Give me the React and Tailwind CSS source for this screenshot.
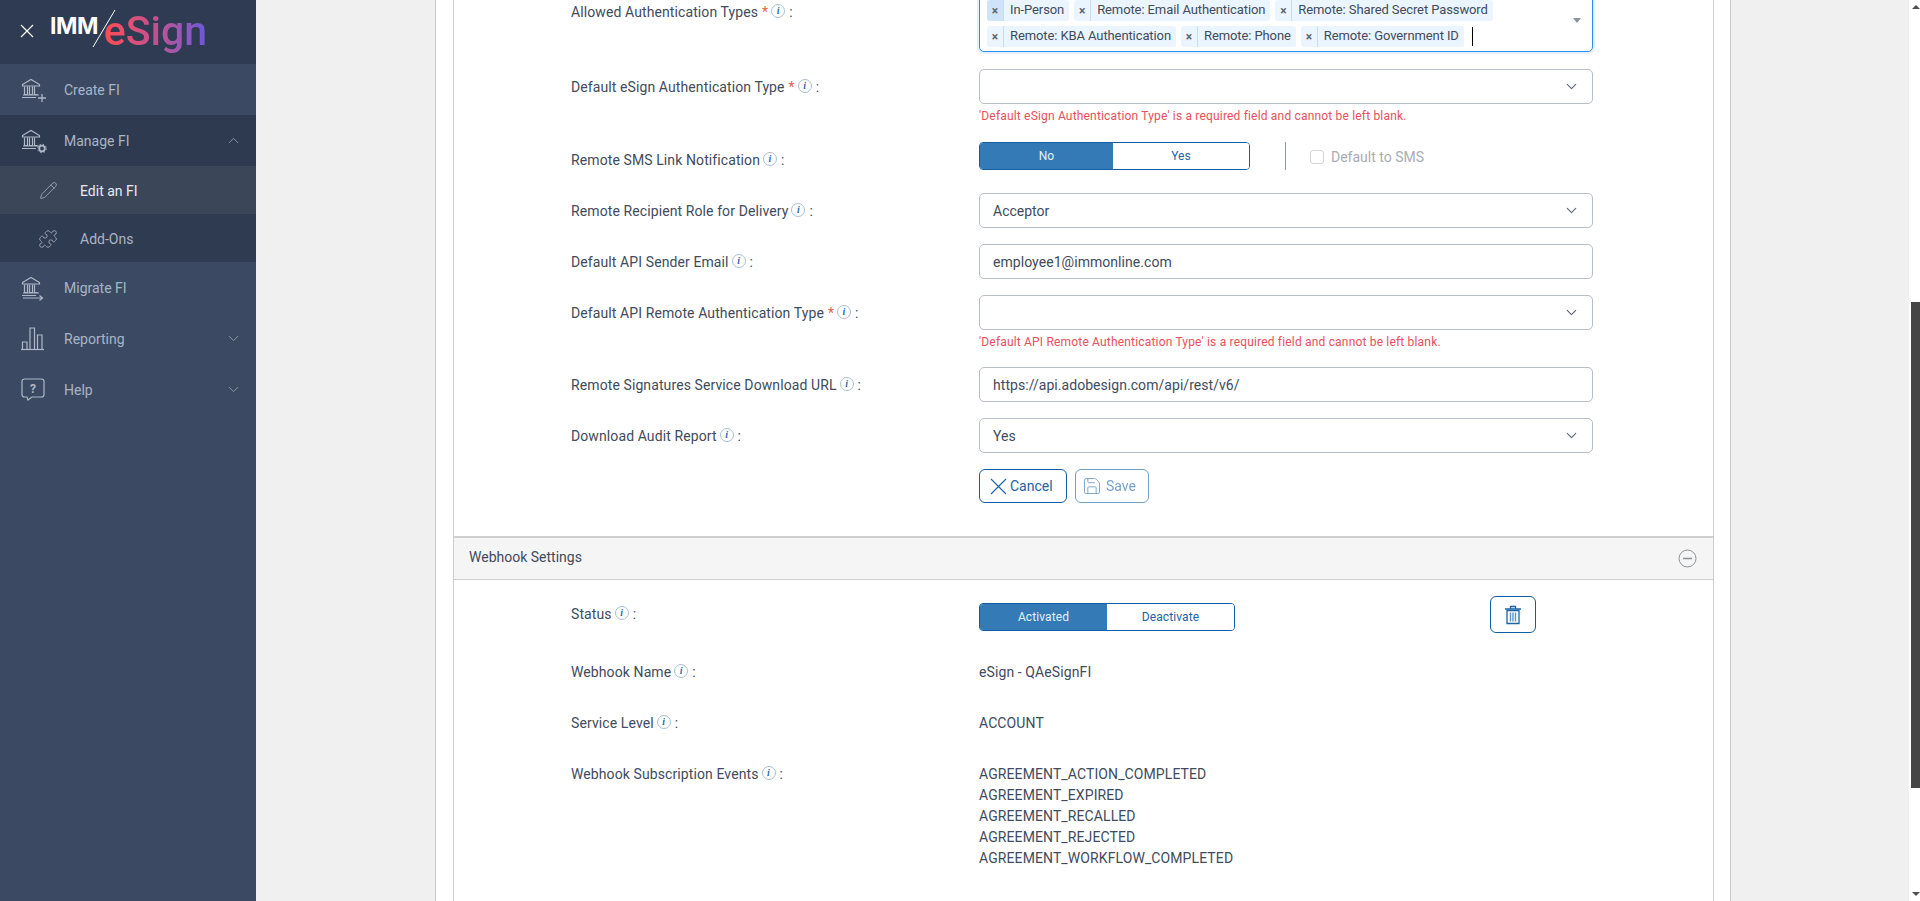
import React from 'react';
import { ChevronDown, ChevronUp, Pencil, Puzzle, Save } from 'lucide-react';

const iconStroke = '#aeb8c6';

// shared bank glyph for the sidebar icons
const BankIcon = ({ children }) => (
  <svg width="30" height="26" viewBox="0 0 30 26" fill="none" stroke={iconStroke} strokeWidth="1.200">
    <path d="M2.500 7.500 11 2.500l8.500 5v1.500h-17z" />
    <path d="M4.500 9.500v8h3v-8M9.500 9.500v8h3v-8M14.500 9.500v8h3" />
    <path d="M3 18h16M2 20.500h14" />
    {children}
  </svg>
);

const AddBankIcon = () => (
  <BankIcon>
    <path d="M22 17v8M18 21h8" strokeWidth="1.300" />
  </BankIcon>
);

const GearBankIcon = () => (
  <BankIcon>
    <circle cx="22" cy="20.500" r="2.800" strokeWidth="1.800" />
    <circle cx="22" cy="20.500" r="4.300" strokeWidth="1" strokeDasharray="1.500 1.900" />
  </BankIcon>
);

const MoveBankIcon = () => (
  <BankIcon>
    <path d="M3 23h19M19.500 20.500 22.500 23l-3 2.500" />
  </BankIcon>
);

const ChartIcon = () => (
  <svg width="26" height="26" viewBox="0 0 26 26" fill="none" stroke={iconStroke} strokeWidth="1.200">
    <path d="M1 23.500h23" />
    <path d="M2.500 23v-7h4.500v7M10 23V2h4.500v21M17.500 23V9h4.500v14" />
  </svg>
);

const HelpIcon = () => (
  <svg width="26" height="26" viewBox="0 0 26 26" fill="none" stroke={iconStroke} strokeWidth="1.200">
    <path d="M4.500 2h17a2.500 2.500 0 0 1 2.500 2.500v13a2.500 2.500 0 0 1-2.500 2.500H12l-4 3-1-3H4.500A2.500 2.500 0 0 1 2 17.500v-13A2.500 2.500 0 0 1 4.500 2z" />
    <text x="13" y="15.500" textAnchor="middle" fontSize="12" fontWeight="700" fontFamily="Roboto" fill={iconStroke} stroke="none">?</text>
  </svg>
);

const InfoDot = () => (
  <span className="inline-flex h-[14px] w-[14px] shrink-0 -translate-y-px items-center justify-center rounded-full border border-[#a9bfd2] font-[family-name:'Liberation_Serif',serif] text-[10px] font-bold italic leading-none text-[#2f6ea5]">
    i
  </span>
);

const Label = ({ text, required, className = '' }) => (
  <div className={`flex h-[35px] items-center text-sm tracking-[0.1px] text-[#414b5c] ${className}`}>
    <span>{text}</span>
    {required && <span className="ml-[4px] text-[#e8604c]">*</span>}
    <span className="ml-[3px] flex"><InfoDot /></span>
    <span className="ml-[4px]">:</span>
  </div>
);

const SelectBox = ({ value }) => (
  <div className="flex h-[35px] items-center justify-between rounded-[5px] border border-[#b7bec8] bg-white pl-[13px] pr-[12px] text-sm text-[#414b5c]">
    <span>{value}</span>
    <ChevronDown size={17} strokeWidth={1.5} className="text-[#5a6473]" />
  </div>
);

const TextBox = ({ value }) => (
  <div className="flex h-[35px] items-center rounded-[5px] border border-[#b7bec8] bg-white pl-[13px] text-sm tracking-[0.05px] text-[#414b5c]">
    {value}
  </div>
);

const ErrorText = ({ children }) => (
  <p className="mt-[3px] h-[18px] text-xs leading-[18px] tracking-[0.18px] text-[#e8505b]">{children}</p>
);

const Toggle = ({ on, off, onWidth, offWidth }) => (
  <div className="flex h-[28px] overflow-hidden rounded-[4px] border border-[#0f5fa6] text-xs">
    <div className={`${onWidth} flex items-center justify-center bg-[#337ab7] text-[#e9f0f7]`}>{on}</div>
    <div className={`${offWidth} flex items-center justify-center bg-white text-[#1c64a5]`}>{off}</div>
  </div>
);

const Chip = ({ text, active }) => (
  <div className="flex h-[21px] items-stretch rounded-[3px] bg-[#ebf5ff] text-[13px] leading-[20px] tracking-[-0.1px] text-[#414b5c]">
    <span className={`${active ? 'bg-[#cfe4fb]' : ''} flex w-[17px] items-center justify-center rounded-l-[3px] border-r border-[#c5def8] text-[12px] font-bold text-[#5a6473]`}>×</span>
    <span className="pl-[6px] pr-[5px]">{text}</span>
  </div>
);

const NavItem = ({ icon, label, chevron, className = '' }) => (
  <div className={`flex h-[51px] items-center pl-[20px] pr-[14px] text-sm text-[#a9b5c6] ${className}`}>
    <span className="flex w-[44px] items-center">{icon}</span>
    <span>{label}</span>
    {chevron === 'down' && <ChevronDown size={17} strokeWidth={1} className="ml-auto text-[#a9b3c2]" />}
    {chevron === 'up' && <ChevronUp size={17} strokeWidth={1} className="ml-auto text-[#a9b3c2]" />}
  </div>
);

const Sidebar = () => (
  <aside className="flex w-[256px] shrink-0 flex-col bg-[#3b4a62]">
    <div className="relative flex h-[64px] items-start bg-[#2f3b52] pl-[19px]">
      <svg width="16" height="16" viewBox="0 0 16 16" className="mt-[23px]" fill="none" stroke="#ffffff" strokeWidth="1.200">
        <path d="M2 2l12 12M14 2 2 14" />
      </svg>
      <span className="ml-[15px] mt-[15px] font-[family-name:Inter,sans-serif] text-[23px] font-bold leading-none tracking-[-0.5px] text-white">IMM</span>
      <svg width="26" height="40" viewBox="0 0 26 40" className="absolute left-[92px] top-[9px]" fill="none" stroke="#ffffff" strokeWidth="1">
        <path d="M23 1 1 38" />
      </svg>
      <span className="ml-[6px] mt-[8px] bg-gradient-to-r from-[#ff4a50] via-[#c2508f] to-[#6b55d9] bg-clip-text text-[41px] font-medium leading-[46px] text-transparent">eSign</span>
    </div>
    <NavItem icon={<AddBankIcon />} label="Create FI" />
    <NavItem icon={<GearBankIcon />} label="Manage FI" chevron="up" className="bg-[#2e3a4f]" />
    <div className="flex h-[48px] items-center bg-[#3b4658] pl-[39px] pt-px text-sm text-[#e6eaf0]">
      <span className="flex w-[41px] items-center"><Pencil size={19} strokeWidth={1} className="text-[#a9b3c2]" /></span>
      Edit an FI
    </div>
    <div className="flex h-[48px] items-center bg-[#2f3b50] pl-[38px] pt-px text-sm text-[#a9b5c6]">
      <span className="flex w-[42px] items-center"><Puzzle size={20} strokeWidth={1} className="text-[#a9b3c2]" /></span>
      Add-Ons
    </div>
    <NavItem icon={<MoveBankIcon />} label="Migrate FI" />
    <NavItem icon={<ChartIcon />} label="Reporting" chevron="down" />
    <NavItem icon={<HelpIcon />} label="Help" chevron="down" />
  </aside>
);

const FormRow = ({ label, required, children, className = '', labelClass = '' }) => (
  <div className={`grid grid-cols-[408px_614px] ${className}`}>
    <Label text={label} required={required} className={labelClass} />
    <div>{children}</div>
  </div>
);

const AuthenticationForm = () => (
  <div className="-mt-[5px] pl-[117px]">
    <FormRow label="Allowed Authentication Types" required labelClass="-mt-px">
      <div className="relative h-[57px] rounded-[5px] border border-[#2f8bf0] bg-white pl-[7px] pt-[4px] shadow-[0_0_0_2px_#e3f0fd]">
        <div className="flex gap-[5px]">
          <Chip text="In-Person" active />
          <Chip text="Remote: Email Authentication" />
          <Chip text="Remote: Shared Secret Password" />
        </div>
        <div className="mt-[5px] flex items-center gap-[5px]">
          <Chip text="Remote: KBA Authentication" />
          <Chip text="Remote: Phone" />
          <Chip text="Remote: Government ID" />
          <span className="ml-[3px] h-[19px] w-px bg-black" />
        </div>
        <span className="absolute right-[11px] top-[22px] h-0 w-0 border-x-[4px] border-t-[5px] border-x-transparent border-t-[#8a929c]" />
      </div>
    </FormRow>

    <FormRow label="Default eSign Authentication Type" required className="mt-[17px]">
      <SelectBox />
      <ErrorText>'Default eSign Authentication Type' is a required field and cannot be left blank.</ErrorText>
    </FormRow>

    <FormRow label="Remote SMS Link Notification" className="mt-[17px]">
      <div className="flex items-start">
        <div className="w-[271px]">
          <Toggle on="No" off="Yes" onWidth="w-[133px]" offWidth="w-[136px]" />
        </div>
        <span className="ml-[35px] h-[28px] w-px bg-[#8c99a8]" />
        <div className="ml-[24px] flex h-[28px] items-center pt-px text-sm text-[#a9adb3]">
          <span className="h-[14px] w-[14px] rounded-[3px] border border-[#d2d4d7] bg-white" />
          <span className="ml-[7px]">Default to SMS</span>
        </div>
      </div>
    </FormRow>

    <FormRow label="Remote Recipient Role for Delivery" className="mt-[16px]">
      <SelectBox value="Acceptor" />
    </FormRow>
    <FormRow label="Default API Sender Email" className="mt-[16px]">
      <TextBox value="employee1@immonline.com" />
    </FormRow>
    <FormRow label="Default API Remote Authentication Type" required className="mt-[16px]">
      <SelectBox />
      <ErrorText>'Default API Remote Authentication Type' is a required field and cannot be left blank.</ErrorText>
    </FormRow>
    <FormRow label="Remote Signatures Service Download URL" className="mt-[16px]">
      <TextBox value="https://api.adobesign.com/api/rest/v6/" />
    </FormRow>
    <FormRow label="Download Audit Report" className="mt-[16px]">
      <SelectBox value="Yes" />
    </FormRow>

    <div className="ml-[408px] mt-[16px] flex gap-[8px] text-sm">
      <button className="flex h-[34px] w-[88px] items-center gap-[3px] rounded-[6px] border border-[#0f5fa6] bg-white pl-[10px] text-[#1c64a5]">
        <svg width="17" height="17" viewBox="0 0 17 17" fill="none" stroke="currentColor" strokeWidth="1.100">
          <path d="M1 1l15 15M16 1 1 16" />
        </svg>
        Cancel
      </button>
      <button className="flex h-[34px] w-[74px] items-center gap-[4px] rounded-[6px] border border-[#0f5fa6] bg-white pl-[6px] text-[#1c64a5] opacity-60">
        <Save size={20} strokeWidth={1.100} />
        Save
      </button>
    </div>
  </div>
);

const WebhookSettings = () => (
  <div>
    <div className="mt-[33px] flex h-[44px] items-center justify-between border-y border-t-2 border-y-[#d0d0d0] bg-[#f5f5f5] pl-[15px] pr-[16px] text-sm text-[#414b5c]">
      <span className="-mt-[3px]">Webhook Settings</span>
      <svg width="19" height="19" viewBox="0 0 19 19" fill="none" stroke="#8d9197" strokeWidth="1">
        <circle cx="9.500" cy="9.500" r="8.500" />
        <path d="M5 9.500h9" strokeWidth="1.500" />
      </svg>
    </div>

    <div className="mt-[16px] pl-[117px] text-sm tracking-[0.1px] text-[#414b5c]">
      <div className="grid grid-cols-[408px_auto]">
        <Label text="Status" />
        <div className="flex items-start">
          <div className="mt-[7px]">
            <Toggle on="Activated" off="Deactivate" onWidth="w-[127px]" offWidth="w-[127px]" />
          </div>
          <button className="ml-[255px] flex h-[37px] w-[46px] items-center justify-center rounded-[6px] border border-[#0f5fa6] bg-white">
            <svg width="18" height="20" viewBox="0 0 18 20" fill="none" stroke="#1c64a5" strokeWidth="1.300">
              <path d="M1 4h16M6.500 3.500V1.500h5v2" />
              <path d="M3 5.500h12v13H3z" />
              <path d="M6.500 7.500v9M9 7.500v9M11.500 7.500v9" strokeWidth="1.400" stroke="#5b95cb" />
            </svg>
          </button>
        </div>
      </div>

      <div className="mt-[21px] grid grid-cols-[408px_auto] items-center">
        <Label text="Webhook Name" />
        <span>eSign - QAeSignFI</span>
      </div>
      <div className="mt-[16px] grid grid-cols-[408px_auto] items-center">
        <Label text="Service Level" />
        <span>ACCOUNT</span>
      </div>
      <div className="mt-[16px] grid grid-cols-[408px_auto]">
        <Label text="Webhook Subscription Events" />
        <ul className="pt-[8px] leading-[21px]">
          <li>AGREEMENT_ACTION_COMPLETED</li>
          <li>AGREEMENT_EXPIRED</li>
          <li>AGREEMENT_RECALLED</li>
          <li>AGREEMENT_REJECTED</li>
          <li>AGREEMENT_WORKFLOW_COMPLETED</li>
        </ul>
      </div>
    </div>
  </div>
);

const Scrollbar = () => (
  <div className="flex w-[11px] shrink-0 flex-col bg-white pl-[2px]">
    <span className="mx-auto mt-[5px] h-0 w-0 border-x-[4px] border-b-[4px] border-x-transparent border-b-[#505050]" />
    <span className="mt-[293px] h-[486px] w-[9px] bg-[#464646]" />
    <span className="mx-auto mt-auto mb-[5px] h-0 w-0 border-x-[4px] border-t-[4px] border-x-transparent border-t-[#505050]" />
  </div>
);

export default function App() {
  return (
    <div className="flex h-[901px] w-full overflow-hidden bg-[#f0f0f0] font-[family-name:Roboto,sans-serif]">
      <Sidebar />
      <main className="flex-1 overflow-hidden pl-[179px]">
        <div className="h-full w-[1296px] border-x border-[#cccccc] bg-white pl-[17px] pr-[16px]">
          <div className="flow-root h-full border-x border-[#cccccc]">
            <AuthenticationForm />
            <WebhookSettings />
          </div>
        </div>
      </main>
      <Scrollbar />
    </div>
  );
}
